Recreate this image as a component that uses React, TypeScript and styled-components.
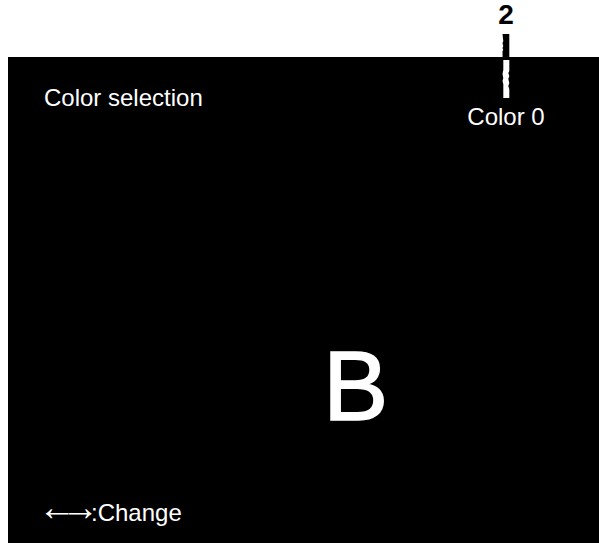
import React from "react";
import styled, { createGlobalStyle } from "styled-components";

const GlobalStyle = createGlobalStyle`
  html, body {
    margin: 0;
    padding: 0;
    background: #fff;
    overflow: hidden;
  }
  body {
    font-family: "Liberation Sans", Arial, sans-serif;
  }
`;

const Page = styled.div`
  position: relative;
  height: 100vh;
  padding: 57px 0 0 8px;
  box-sizing: border-box;
`;

const Screen = styled.div`
  height: 100%;
  background: #000;
  color: #fff;
  padding: 27px 0 0 36px;
  box-sizing: border-box;
  display: flex;
  flex-direction: column;
  align-items: flex-start;
`;

const Caption = styled.div`
  font-size: 24px;
  line-height: 28px;
  white-space: nowrap;
`;

const Letter = styled.div`
  font-size: 98px;
  line-height: 1;
  -webkit-text-stroke: 1.5px #fff;
  margin: 225px 0 0 279px;
`;

const Hint = styled(Caption)`
  margin-top: 64px;
`;

const Arrows = styled.span`
  font-size: 38px;
  line-height: 0;
  letter-spacing: -15px;
  margin: 0 7px 0 -6px;
  vertical-align: 1px;
`;

// marker showing which colour slot is being edited
const Marker = styled.div`
  position: absolute;
  left: 506px;
  top: 1px;
  transform: translateX(-50%);
  display: flex;
  flex-direction: column;
  align-items: center;
`;

const Slot = styled.div`
  font-size: 28px;
  font-weight: bold;
  line-height: 1;
  color: #000;
`;

const Tick = styled.svg`
  display: block;
  margin-top: 5px;
`;

const MarkerLabel = styled(Caption)`
  color: #fff;
  margin-top: 5px;
`;

export default function App() {
  return (
    <>
      <GlobalStyle />
      <Page>
        <Screen>
          <Caption>Color selection</Caption>
          <Letter>B</Letter>
          <Hint>
            <Arrows>←→</Arrows>:Change
          </Hint>
        </Screen>
        <Marker>
          <Slot>2</Slot>
          <Tick width="8" height="64" viewBox="0 0 8 64">
            <polygon
              points="0,0 7,0 7,23 0,23 0,17 1,16 0,14 1,12 0,9 1,7"
              fill="#000"
            />
            <polygon
              points="1,26 7,26 7,37 6,39 7,42 6,45 7,49 6,52 7,55 7,64 1,64 1,50 0,47 1,44 0,40 1,36"
              fill="#fff"
            />
          </Tick>
          <MarkerLabel>Color 0</MarkerLabel>
        </Marker>
      </Page>
    </>
  );
}
